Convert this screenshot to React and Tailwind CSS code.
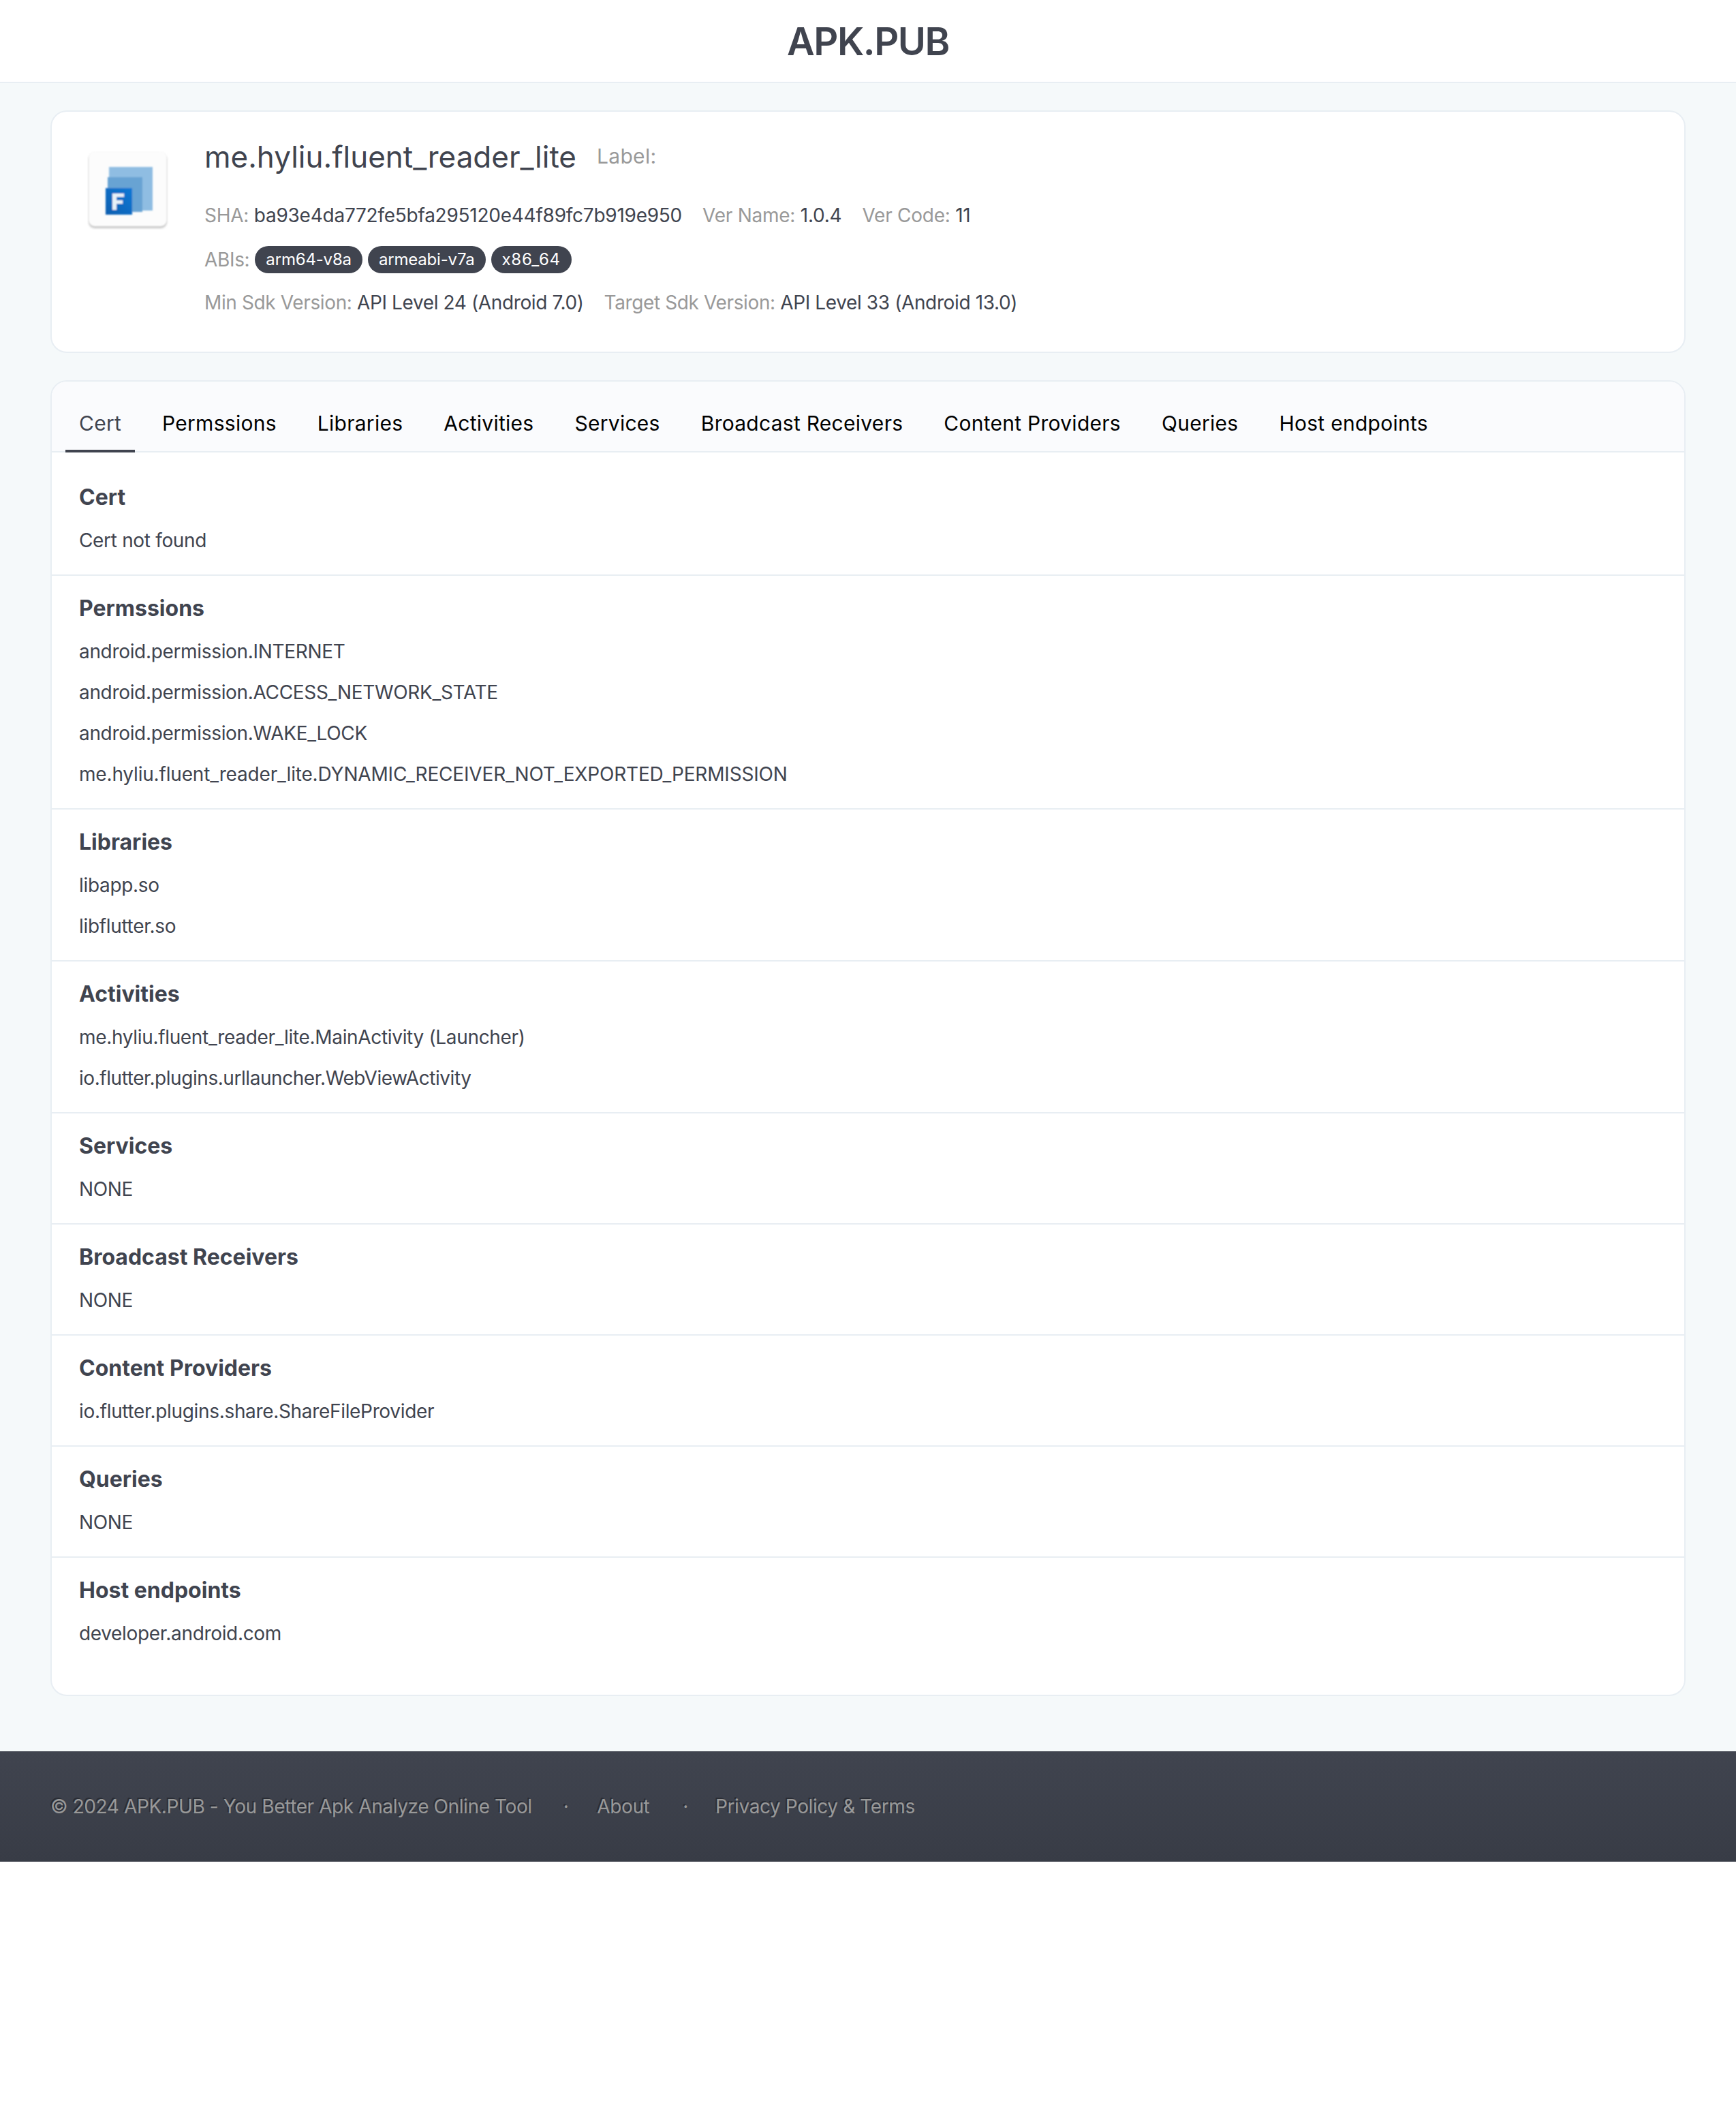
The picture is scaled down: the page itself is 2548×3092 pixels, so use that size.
const tabs = ["Cert","Permssions","Libraries","Activities","Services","Broadcast Receivers","Content Providers","Queries","Host endpoints"];
const sections = [
  ["Cert",["Cert not found"]],
  ["Permssions",["android.permission.INTERNET","android.permission.ACCESS_NETWORK_STATE","android.permission.WAKE_LOCK",{ t: "me.hyliu.fluent_reader_lite.DYNAMIC_RECEIVER_NOT_EXPORTED_PERMISSION", c: "tracking-[-0.18px]" }]],
  ["Libraries",["libapp.so","libflutter.so"]],
  ["Activities",["me.hyliu.fluent_reader_lite.MainActivity (Launcher)",{ t: "io.flutter.plugins.urllauncher.WebViewActivity", c: "tracking-[-0.44px]" }]],
  ["Services",["NONE"]],
  ["Broadcast Receivers",["NONE"]],
  ["Content Providers",["io.flutter.plugins.share.ShareFileProvider"]],
  ["Queries",["NONE"]],
  ["Host endpoints",["developer.android.com"]],
];

function Icon() {
  return (
    <svg width="124" height="124" viewBox="0 0 124 124" className="shrink-0 mt-[3px]">
      <defs>
        <filter id="b" x="-10%" y="-10%" width="120%" height="120%"><feGaussianBlur stdDeviation="0.9" /></filter>
        <filter id="s" x="-10%" y="-10%" width="120%" height="120%"><feGaussianBlur stdDeviation="1.5" /></filter>
        <linearGradient id="g" x1="0" y1="1" x2="1" y2="0"><stop offset="0" stopColor="#0a5fb0" /><stop offset="1" stopColor="#0b78d6" /></linearGradient>
      </defs>
      <rect x="2" y="6" width="115" height="110" rx="9" fill="#c9c9c9" filter="url(#s)" />
      <rect x="2" y="3" width="115" height="110" rx="9" fill="#fcfcfc" filter="url(#b)" />
      <g filter="url(#b)">
        <rect x="32" y="26" width="64" height="64" fill="#8fbde2" />
        <rect x="30" y="41" width="51" height="51" fill="#68a3d3" />
        <rect x="27" y="57" width="39" height="39" fill="url(#g)" />
        <path d="M37 89V65h17v5H43v5h9v5h-9v9z" fill="#e8f1f8" />
      </g>
    </svg>
  );
}

function Kv({ k, v }) {
  return <span><span className="text-[#999]">{k}: </span><span>{v}</span></span>;
}

function Pill({ children, className }) {
  return <span className={"rounded-[20px] bg-[#40444f] px-4 h-10 leading-10 text-[24px] text-white " + className}>{children}</span>;
}

export default function App() {
  return (
    <div className="font-['Inter',sans-serif] text-[28px] tracking-[-0.33px] text-[#40444f]">
      <header className="h-[122px] border-b-2 border-[#e8eef3] bg-white flex items-center justify-center">
        <h1 className="text-[56px] font-semibold leading-none tracking-[-1.5px] mt-[2px]">APK.PUB</h1>
      </header>
      <main className="bg-[#f5f9fa] px-[74px] pt-10 pb-[81px]">
        <section className="h-[356px] rounded-3xl border-2 border-[#e8eef3] bg-white flex pl-[52px] pt-[52px]">
          <Icon />
          <div className="ml-[48px] flex flex-col">
            <div className="flex items-center h-[44px] -mt-[8px]">
              <span className="text-[44px] leading-[44px] tracking-normal">me.hyliu.fluent_reader_lite</span>
              <span className="ml-[30px] text-[#999] text-[30px] tracking-[0.3px] -mt-[2px]">Label:</span>
            </div>
            <div className="mt-[44px] leading-[40px] h-[40px] flex gap-[30px] tracking-[-0.25px]">
              <Kv k="SHA" v="ba93e4da772fe5bfa295120e44f89fc7b919e950" />
              <Kv k="Ver Name" v="1.0.4" />
              <Kv k="Ver Code" v="11" />
            </div>
            <div className="mt-[24px] h-[40px] flex items-center gap-2 translate-y-[1px]">
              <span className="text-[#999] leading-[40px]">ABIs:</span>
              <Pill className="tracking-[-0.18px]">arm64-v8a</Pill>
              <Pill className="tracking-[-0.18px]">armeabi-v7a</Pill>
              <Pill className="tracking-[0.7px]">x86_64</Pill>
            </div>
            <div className="mt-[24px] leading-[40px] h-[40px] flex gap-[30px] tracking-[-0.38px]">
              <Kv k="Min Sdk Version" v="API Level 24 (Android 7.0)" />
              <Kv k="Target Sdk Version" v="API Level 33 (Android 13.0)" />
            </div>
          </div>
        </section>
        <section className="mt-10 rounded-3xl border-2 border-[#e8eef3] bg-white overflow-hidden pb-10">
          <nav className="h-[104px] bg-[#fafbfd] border-b-2 border-[#e8eef3] flex gap-5 pl-5 items-stretch">
            {tabs.map((t, i) => (
              <div key={t} className={"px-5 text-[30px] tracking-[0.27px] leading-[62px] pt-[30px] h-[104px] " + (i === 0 ? "text-[#40444f] border-b-4 border-[#40444f]" : "text-black")}>{t}</div>
            ))}
          </nav>
          <div className="pt-[18px]">
            {sections.map(([title, rows], i) => (
              <div key={title} className={"px-10 pt-[28px] pb-[20px] " + (i === 0 ? "" : "border-t-2 border-[#e8eef3]")}>
                <h3 className="text-[32px] font-bold leading-10 mb-[13px] tracking-normal">{title}</h3>
                {rows.map((r) => typeof r === "string"
                  ? <div key={r} className="leading-[60px] h-[60px]">{r}</div>
                  : <div key={r.t} className={"leading-[60px] h-[60px] " + r.c}>{r.t}</div>)}
              </div>
            ))}
          </div>
        </section>
      </main>
      <footer className="h-[162px] bg-gradient-to-b from-[#40444f] to-[#383c46] px-[74px] flex items-center text-[#999] tracking-[-0.4px] [text-shadow:-2px_-2px_0_#2a2d35]">
        <span>© 2024 APK.PUB - You Better Apk Analyze Online Tool</span>
        <span className="ml-[46px] mr-[42px]">·</span>
        <span>About</span>
        <span className="ml-[49px] mr-[40px]">·</span>
        <span>Privacy Policy &amp; Terms</span>
      </footer>
    </div>
  );
}
